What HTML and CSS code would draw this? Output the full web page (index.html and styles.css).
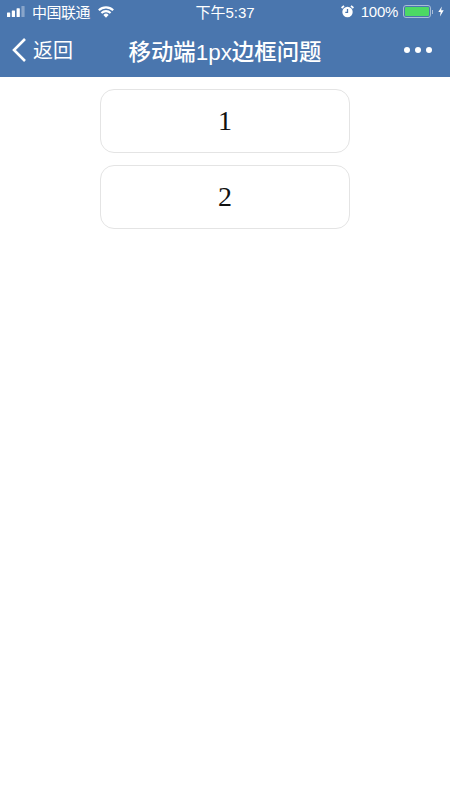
FILE: index.html
```html
<!DOCTYPE html>
<html lang="zh-CN">
<head>
    <meta charset="UTF-8">
    <meta name="viewport" content="width=device-width, initial-scale=1.0">
    <title>移动端1px边框问题</title>
    <link rel="stylesheet" href="styles.css">
</head>
<body>
    <div class="header">
        <div class="status-bar">
            <div class="status-left">
                <svg class="signal" width="19" height="11" viewBox="0 0 19 11">
                    <rect x="0" y="6.5" width="3.2" height="4.5" rx="0.6" fill="#fff"/>
                    <rect x="4.8" y="4.5" width="3.2" height="6.5" rx="0.6" fill="#fff"/>
                    <rect x="9.6" y="2.2" width="3.2" height="8.8" rx="0.6" fill="#fff"/>
                    <rect x="14.4" y="0" width="3.2" height="11" rx="0.6" fill="#fff" opacity="0.35"/>
                </svg>
                <span class="carrier">中国联通</span>
                <svg class="wifi" width="16" height="12" viewBox="0 0 16 12">
                    <path d="M0.8 4.2 A10.5 10.5 0 0 1 15.2 4.2" fill="none" stroke="#fff" stroke-width="2.1"/>
                    <path d="M3.4 6.9 A6.8 6.8 0 0 1 12.6 6.9" fill="none" stroke="#fff" stroke-width="2.1"/>
                    <path d="M5.4 8.9 A3.6 3.6 0 0 1 10.6 8.9 L8 11.8 Z" fill="#fff"/>
                </svg>
            </div>
            <div class="status-time">下午5:37</div>
            <div class="status-right">
                <svg class="alarm" width="13" height="13" viewBox="0 0 13 13">
                    <circle cx="6.5" cy="7" r="5.2" fill="#fff"/>
                    <path d="M6.5 4 V7.3 H4.3" fill="none" stroke="#4a76ae" stroke-width="1.3"/>
                    <path d="M0.6 3 L3 0.8 M12.4 3 L10 0.8" stroke="#fff" stroke-width="1.7"/>
                </svg>
                <span class="battery-text">100%</span>
                <div class="battery">
                    <div class="battery-level"></div>
                </div>
                <div class="battery-cap"></div>
                <svg class="bolt" width="6" height="11" viewBox="0 0 6 10">
                    <path d="M3.8 0 L0.3 5.6 H2.6 L2 10 L5.7 3.8 H3.2 Z" fill="#fff"/>
                </svg>
            </div>
        </div>
        <div class="nav-bar">
            <div class="nav-back">
                <svg width="16" height="26" viewBox="0 0 16 26">
                    <path d="M14 2 L3 13 L14 24" fill="none" stroke="#fff" stroke-width="2.6"/>
                </svg>
                <span>返回</span>
            </div>
            <div class="nav-title">移动端1px边框问题</div>
            <div class="nav-more">
                <span class="dot"></span>
                <span class="dot"></span>
                <span class="dot"></span>
            </div>
        </div>
    </div>

    <div class="content">
        <div class="box">1</div>
        <div class="box">2</div>
    </div>
</body>
</html>
```

FILE: styles.css
```css
* {
    margin: 0;
    padding: 0;
    box-sizing: border-box;
}

body {
    font-family: "Liberation Sans", "Noto Sans CJK SC", sans-serif;
    background: white;
    min-height: 100vh;
}

.header {
    background-color: #4a76ae;
    color: white;
    height: 77px;
}

.status-bar {
    height: 24px;
    display: flex;
    align-items: center;
    justify-content: space-between;
    position: relative;
    padding: 0 6px 1px 7px;
    font-size: 15px;
}

.status-left {
    display: flex;
    align-items: center;
}

.signal {
    margin-right: 6px;
}

.carrier {
    margin-right: 8px;
    letter-spacing: -0.5px;
}

.status-time {
    position: absolute;
    left: 0;
    right: 0;
    text-align: center;
}

.status-right {
    display: flex;
    align-items: center;
    position: relative;
}

.alarm {
    margin-right: 7px;
}

.battery-text {
    margin-right: 5px;
    letter-spacing: -0.3px;
}

.battery {
    width: 28px;
    height: 13px;
    border: 1px solid #a9bdd6;
    border-radius: 3px;
    padding: 1px;
}

.battery-level {
    height: 100%;
    background-color: #4cd964;
    border-radius: 1px;
}

.battery-cap {
    width: 1px;
    height: 4px;
    background-color: #a9bdd6;
    margin-left: 1px;
    margin-right: 5px;
}

.nav-bar {
    height: 53px;
    display: flex;
    align-items: center;
    justify-content: space-between;
    position: relative;
    padding: 0 18px 2px 11px;
}

.nav-back {
    display: flex;
    align-items: center;
    font-size: 20px;
    gap: 6px;
}

.nav-title {
    position: absolute;
    left: 0;
    right: 0;
    text-align: center;
    font-size: 22.4px;
    font-weight: 500;
}

.nav-more {
    display: flex;
    gap: 5px;
}

.dot {
    width: 6px;
    height: 6px;
    border-radius: 50%;
    background-color: white;
}

.content {
    display: flex;
    flex-direction: column;
    align-items: center;
    gap: 12px;
    padding-top: 12px;
}

.box {
    width: 250px;
    height: 64px;
    border: 1.5px solid #e4e4e4;
    border-radius: 14px;
    display: flex;
    align-items: center;
    justify-content: center;
    font-family: "Liberation Serif", "Noto Serif CJK SC", serif;
    font-size: 28px;
    color: #111;
}
```
